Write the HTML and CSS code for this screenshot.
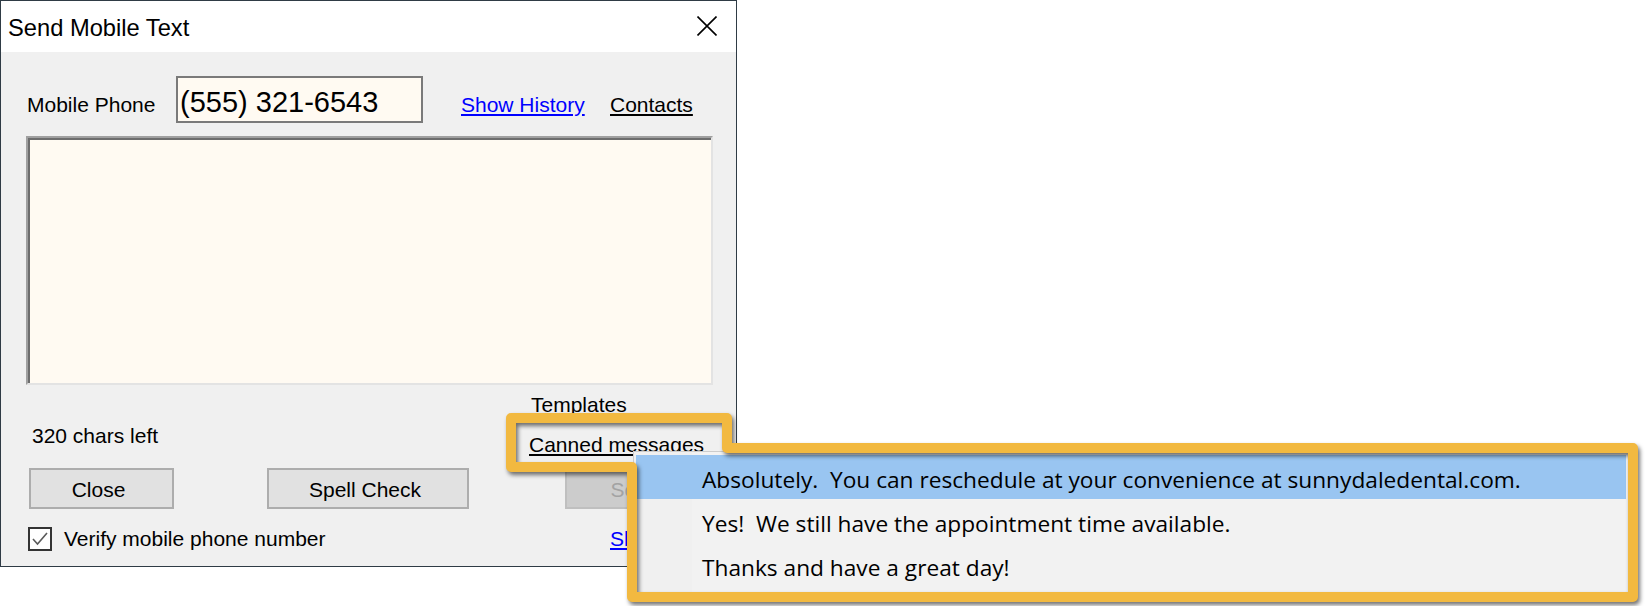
FILE: index.html
```html
<!DOCTYPE html>
<html lang="en">
<head>
    <meta charset="UTF-8">
    <meta name="viewport" content="width=device-width, initial-scale=1.0">
    <title>Send Mobile Text</title>
    <link rel="stylesheet" href="styles.css">
</head>
<body>
    <div class="dialog">
        <div class="titlebar">
            <span class="title">Send Mobile Text</span>
            <svg class="close-x" width="20" height="20" viewBox="0 0 20 20">
                <path d="M0.5 0.5 L19.5 19.5 M19.5 0.5 L0.5 19.5" stroke="#000" stroke-width="1.6" fill="none"/>
            </svg>
        </div>

        <div class="dialog-body">
            <!-- Phone number row -->
            <div class="phone-row">
                <label class="field-label" for="phone">Mobile Phone</label>
                <input type="text" id="phone" class="phone-input" value="(555) 321-6543">
                <a class="link link-blue" href="#">Show History</a>
                <a class="link" href="#">Contacts</a>
            </div>

            <textarea class="message-box"></textarea>

            <div class="footer-row">
                <div class="chars-left">320 chars left</div>
                <div class="template-links">
                    <div class="templates-label">Templates</div>
                    <a class="link canned-link" href="#">Canned messages</a>
                </div>
            </div>

            <div class="button-row">
                <button class="btn btn-close">Close</button>
                <button class="btn btn-spell">Spell Check</button>
                <button class="btn btn-send" disabled>Send</button>
            </div>

            <div class="verify-row">
                <label class="verify">
                    <span class="checkbox">
                        <svg width="20" height="20" viewBox="0 0 20 20">
                            <path d="M3 10 L7.5 15 L17 4" stroke="#5a5a5a" stroke-width="1.6" fill="none"/>
                        </svg>
                    </span>
                    Verify mobile phone number
                </label>
                <a class="link link-blue" href="#">Show Log</a>
            </div>
        </div>
    </div>

    <!-- Canned messages dropdown -->
    <div class="context-menu">
        <div class="menu-item active">Absolutely.  You can reschedule at your convenience at sunnydaledental.com.</div>
        <div class="menu-item">Yes!  We still have the appointment time available.</div>
        <div class="menu-item">Thanks and have a great day!</div>
    </div>

    <!-- Highlight outline around link and menu -->
    <svg class="callout" width="1646" height="606" viewBox="0 0 1646 606">
        <path d="M511 418 H727 V448 H1633 V597 H632 V467 H511 Z"/>
    </svg>
</body>
</html>
```

FILE: styles.css
```css
body {
    margin: 0;
    width: 1646px;
    height: 606px;
    overflow: hidden;
    position: relative;
    background-color: #ffffff;
    color: #000000;
    font-family: "Liberation Sans", Arial, sans-serif;
    font-size: 21px;
}

.dialog {
    width: 737px;
    height: 567px;
    box-sizing: border-box;
    border: 1px solid #2f3b45;
    background-color: #f0f0f0;
}

.titlebar {
    height: 51px;
    background-color: #ffffff;
    display: flex;
    align-items: center;
    justify-content: space-between;
    padding: 0 19px 0 7px;
}

.title {
    font-size: 23.7px;
    padding-top: 3px;
}

.close-x {
    display: block;
    margin-top: -1px;
}

.dialog-body {
    padding: 0 22px 0 25px;
}

.phone-row {
    margin-top: 24px;
    height: 47px;
    display: grid;
    grid-template-columns: 150px 285px 149px auto;
    align-items: center;
}

.field-label {
    padding: 10px 0 0 1px;
}

.phone-input {
    width: 247px;
    height: 47px;
    box-sizing: border-box;
    border: 2px solid #7a7a7a;
    background-color: #fffaf2;
    padding: 6px 5px 0 2px;
    font-family: "Liberation Sans", Arial, sans-serif;
    font-size: 29px;
    color: #000000;
    outline: none;
}

.link {
    color: #000000;
    text-decoration: underline;
    padding-top: 10px;
}

.link-blue {
    color: #0000ff;
}

.message-box {
    display: block;
    margin-top: 13px;
    width: 687px;
    height: 249px;
    box-sizing: border-box;
    border: 2px solid;
    border-color: #a0a0a0 #e3e3e3 #e3e3e3 #a0a0a0;
    box-shadow: inset 2px 2px 0 #6d6d6d;
    background-color: #fffaf2;
    resize: none;
    outline: none;
}

.footer-row {
    height: 83px;
    display: grid;
    grid-template-columns: 503px auto;
    align-items: start;
}

.chars-left {
    margin-top: 39px;
    padding-left: 6px;
}

.templates-label {
    margin-top: 8px;
    padding-left: 2px;
}

.canned-link {
    display: inline-block;
    margin-top: 16px;
    padding-top: 0;
}

.button-row {
    display: flex;
}

.btn {
    height: 41px;
    box-sizing: border-box;
    border: 2px solid #adadad;
    background-color: #e1e1e1;
    font-family: "Liberation Sans", Arial, sans-serif;
    font-size: 21px;
    color: #000000;
    padding: 3px 6px 0 0;
}

.btn-close {
    width: 145px;
    margin-left: 3px;
}

.btn-spell {
    width: 202px;
    margin-left: 93px;
}

.btn-send {
    width: 146px;
    margin-left: 96px;
    background-color: #cccccc;
    border-color: #bfbfbf;
    color: #a3a3a3;
}

.verify-row {
    margin-top: 18px;
    height: 24px;
    display: grid;
    grid-template-columns: 584px auto;
    align-items: center;
}

.verify-row .link {
    padding-top: 0;
}

.verify {
    display: flex;
    align-items: center;
    gap: 12px;
    padding-left: 2px;
}

.checkbox {
    width: 24px;
    height: 24px;
    box-sizing: border-box;
    border: 2px solid #333333;
    background-color: #ffffff;
    display: flex;
    align-items: center;
    justify-content: center;
}

.checkbox svg {
    display: block;
}

.context-menu {
    position: absolute;
    left: 633px;
    top: 451px;
    width: 996px;
    box-sizing: border-box;
    border: 1px solid #cccccc;
    background: linear-gradient(to right, #f0f0f0 58px, #f2f2f2 58px);
    padding: 3px 2px 8px;
    font-family: "Open Sans", "Noto Sans", sans-serif;
    font-size: 22.7px;
}

.menu-item {
    height: 38px;
    line-height: 38px;
    padding: 6px 0 0 66px;
    white-space: pre;
}

.menu-item.active {
    background-color: #99c5f1;
}

.callout {
    position: absolute;
    left: 0;
    top: 0;
    pointer-events: none;
    filter: drop-shadow(2px 3px 2px rgba(0, 0, 0, 0.55));
}

.callout path {
    fill: none;
    stroke: #f2b940;
    stroke-width: 10;
    stroke-linejoin: round;
}
```
